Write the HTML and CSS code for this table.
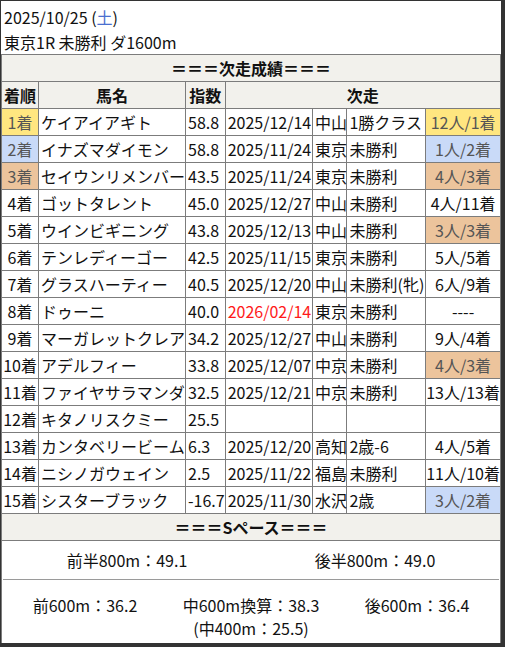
FILE: index.html
```html
<!DOCTYPE html>
<html lang="ja">
<head>
<meta charset="utf-8">
<title>次走成績</title>
<link rel="stylesheet" href="styles.css">
</head>
<body>
<div class="page">
  <div class="info">
    <div>2025/10/25 (<span class="sat">土</span>)</div>
    <div>東京1R 未勝利 ダ1600m</div>
  </div>
  <table class="result">
    <colgroup>
      <col class="c-rank"><col class="c-name"><col class="c-idx"><col class="c-date"><col class="c-place"><col class="c-class"><col class="c-res">
    </colgroup>
    <tr><th colspan="7" class="sec">＝＝＝次走成績＝＝＝</th></tr>
    <tr class="head"><th>着順</th><th>馬名</th><th>指数</th><th colspan="4">次走</th></tr>
    <tr><td class="rank first">1着</td><td>ケイアイアギト</td><td>58.8</td><td>2025/12/14</td><td>中山</td><td>1勝クラス</td><td class="res first">12人/1着</td></tr>
    <tr><td class="rank second">2着</td><td>イナズマダイモン</td><td>58.8</td><td>2025/11/24</td><td>東京</td><td>未勝利</td><td class="res second">1人/2着</td></tr>
    <tr><td class="rank third">3着</td><td>セイウンリメンバー</td><td>43.5</td><td>2025/11/24</td><td>東京</td><td>未勝利</td><td class="res third">4人/3着</td></tr>
    <tr><td class="rank">4着</td><td>ゴットタレント</td><td>45.0</td><td>2025/12/27</td><td>中山</td><td>未勝利</td><td class="res">4人/11着</td></tr>
    <tr><td class="rank">5着</td><td>ウインビギニング</td><td>43.8</td><td>2025/12/13</td><td>中山</td><td>未勝利</td><td class="res third">3人/3着</td></tr>
    <tr><td class="rank">6着</td><td>テンレディーゴー</td><td>42.5</td><td>2025/11/15</td><td>東京</td><td>未勝利</td><td class="res">5人/5着</td></tr>
    <tr><td class="rank">7着</td><td>グラスハーティー</td><td>40.5</td><td>2025/12/20</td><td>中山</td><td>未勝利(牝)</td><td class="res">6人/9着</td></tr>
    <tr><td class="rank">8着</td><td>ドゥーニ</td><td>40.0</td><td class="future">2026/02/14</td><td>東京</td><td>未勝利</td><td class="res">----</td></tr>
    <tr><td class="rank">9着</td><td>マーガレットクレア</td><td>34.2</td><td>2025/12/27</td><td>中山</td><td>未勝利</td><td class="res">9人/4着</td></tr>
    <tr><td class="rank">10着</td><td>アデルフィー</td><td>33.8</td><td>2025/12/07</td><td>中京</td><td>未勝利</td><td class="res third">4人/3着</td></tr>
    <tr><td class="rank">11着</td><td>ファイヤサラマンダ</td><td>32.5</td><td>2025/12/21</td><td>中京</td><td>未勝利</td><td class="res">13人/13着</td></tr>
    <tr><td class="rank">12着</td><td>キタノリスクミー</td><td>25.5</td><td></td><td></td><td></td><td class="res"></td></tr>
    <tr><td class="rank">13着</td><td>カンタベリービーム</td><td>6.3</td><td>2025/12/20</td><td>高知</td><td>2歳-6</td><td class="res">4人/5着</td></tr>
    <tr><td class="rank">14着</td><td>ニシノガウェイン</td><td>2.5</td><td>2025/11/22</td><td>福島</td><td>未勝利</td><td class="res">11人/10着</td></tr>
    <tr><td class="rank">15着</td><td>シスターブラック</td><td>-16.7</td><td>2025/11/30</td><td>水沢</td><td>2歳</td><td class="res second">3人/2着</td></tr>
    <tr><th colspan="7" class="sec">＝＝＝Sペース＝＝＝</th></tr>
  </table>
  <div class="pace">
    <div class="halves">
      <span>前半800m：49.1</span>
      <span>後半800m：49.0</span>
    </div>
    <div class="thirds">
      <span>前600m：36.2</span>
      <span>中600m換算：38.3<br>(中400m：25.5)</span>
      <span>後600m：36.4</span>
    </div>
  </div>
</div>
</body>
</html>
```

FILE: styles.css
```css
html, body {
  margin: 0;
  padding: 0;
}
body {
  background: #333333;
  font-family: "Noto Sans CJK JP", "Noto Sans", sans-serif;
  font-size: 16px;
  color: #111;
}
.page {
  margin: 1px 4px 3px 1px;
  background: #ffffff;
}
.info {
  padding: 4px 0 0 3px;
  line-height: 25px;
  height: 49px;
}
.sat {
  color: #4a6fcf;
}
.result {
  width: 100%;
  border-collapse: collapse;
  table-layout: fixed;
}
.c-rank { width: 37px; }
.c-name { width: 146.5px; }
.c-idx { width: 39.5px; }
.c-date { width: 87px; }
.c-place { width: 34.5px; }
.c-class { width: 78.5px; }
.c-res { width: 74.5px; }
.result tr {
  height: 27px;
}
.result th,
.result td {
  border: 1px solid #7c7c7c;
  padding: 0 0 0 2px;
  white-space: nowrap;
  line-height: 20px;
  text-align: left;
  overflow: visible;
}
.result th {
  background: #f2f1ec;
  font-weight: bold;
  text-align: center;
  padding: 0;
}
.result td.rank,
.result td.res {
  text-align: center;
  padding: 0;
}
.first { background: #ffe680; }
.second { background: #c9daf8; }
.third { background: #ecc49c; }
td.first, td.second, td.third { color: #555; }
.future { color: #ff1a1a; }
.pace {
  border-left: 1px solid #7c7c7c;
  border-right: 1px solid #7c7c7c;
}
.halves {
  display: grid;
  grid-template-columns: 1fr 1fr;
  text-align: center;
  line-height: 24px;
  padding: 7px 0 7px;
  margin: 0 1px;
  border-bottom: 1px solid #9a9a9a;
}
.thirds {
  display: grid;
  grid-template-columns: 1fr 1fr 1fr;
  text-align: center;
  line-height: 23px;
  padding: 14px 0 3px;
}
```
